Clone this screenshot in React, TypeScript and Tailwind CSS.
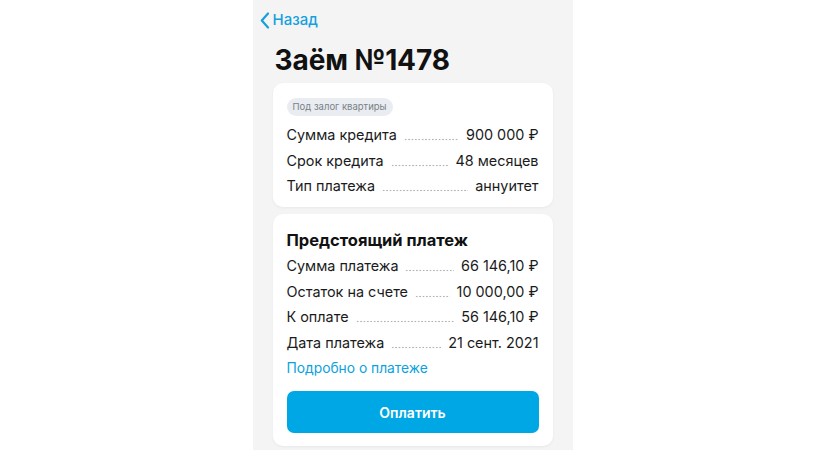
const font = { fontFamily: 'Inter, "Noto Sans", sans-serif' };

type Row = { label: string; value: string };

const loanRows: Row[] = [
  { label: 'Сумма кредита', value: '900 000 ₽' },
  { label: 'Срок кредита', value: '48 месяцев' },
  { label: 'Тип платежа', value: 'аннуитет' },
];

const paymentRows: Row[] = [
  { label: 'Сумма платежа', value: '66 146,10 ₽' },
  { label: 'Остаток на счете', value: '10 000,00 ₽' },
  { label: 'К оплате', value: '56 146,10 ₽' },
  { label: 'Дата платежа', value: '21 сент. 2021' },
];

function InfoRow({ label, value }: Row) {
  return (
    <div className="flex items-end h-5 text-[14.4px] leading-5 text-[#1b1b1b]">
      <span className="whitespace-nowrap">{label}</span>
      {/* dotted leader */}
      <span className="flex-1 mx-[7px] mb-[4px] h-[3px] bg-[radial-gradient(circle,#b3b3b3_0.8px,transparent_1.1px)] bg-[length:3.4px_3px] bg-repeat-x" />
      <span className="whitespace-nowrap">{value}</span>
    </div>
  );
}

export default function App() {
  return (
    <div className="flex justify-center bg-white h-[450px] overflow-hidden" style={font}>
      <div className="w-[320px] h-full bg-[#f4f4f4] px-5 pt-[10px]">
        {/* Back link */}
        <div className="flex items-center h-5 -ml-[13px] gap-[3px] text-[#14a1dd]">
          <svg width="10" height="17" viewBox="0 0 10 17" fill="none">
            <path d="M8 1.5 L1.8 8.5 L8 15.5" stroke="currentColor" strokeWidth="2.2" strokeLinecap="round" strokeLinejoin="round" />
          </svg>
          <span className="text-[15px] font-medium leading-5">Назад</span>
        </div>

        <h1 className="mt-[13px] ml-[2px] text-[28px] leading-[34px] font-bold text-[#111] tracking-[-0.1px]">
          Заём №1478
        </h1>

        {/* Loan card */}
        <div className="mt-[6px] bg-white rounded-[10px] shadow-[0_1px_3px_rgba(0,0,0,0.05)] px-[14px] pt-[15px] pb-[11px]">
          <div className="flex w-fit items-center h-[18px] px-[6px] rounded-full bg-[#e9edf1] text-[9.5px] leading-none text-[#7a7f85]">
            Под залог квартиры
          </div>
          <div className="mt-[9px] flex flex-col gap-[5.5px]">
            {loanRows.map((r) => (
              <InfoRow key={r.label} {...r} />
            ))}
          </div>
        </div>

        {/* Upcoming payment card */}
        <div className="mt-[7px] bg-white rounded-[10px] shadow-[0_1px_3px_rgba(0,0,0,0.05)] px-[14px] pt-[15px] pb-[13px]">
          <h2 className="text-[16.5px] leading-[22px] font-bold text-[#111]">Предстоящий платеж</h2>
          <div className="mt-[5px] flex flex-col gap-[5.7px]">
            {paymentRows.map((r) => (
              <InfoRow key={r.label} {...r} />
            ))}
          </div>
          <a className="block mt-[5px] text-[13.8px] leading-5 text-[#0ba2dd]">Подробно о платеже</a>
          <button className="mt-[13px] w-full h-[42px] rounded-[7px] bg-[#00a7e5] text-white text-[14px] font-semibold">
            Оплатить
          </button>
        </div>
      </div>
    </div>
  );
}
